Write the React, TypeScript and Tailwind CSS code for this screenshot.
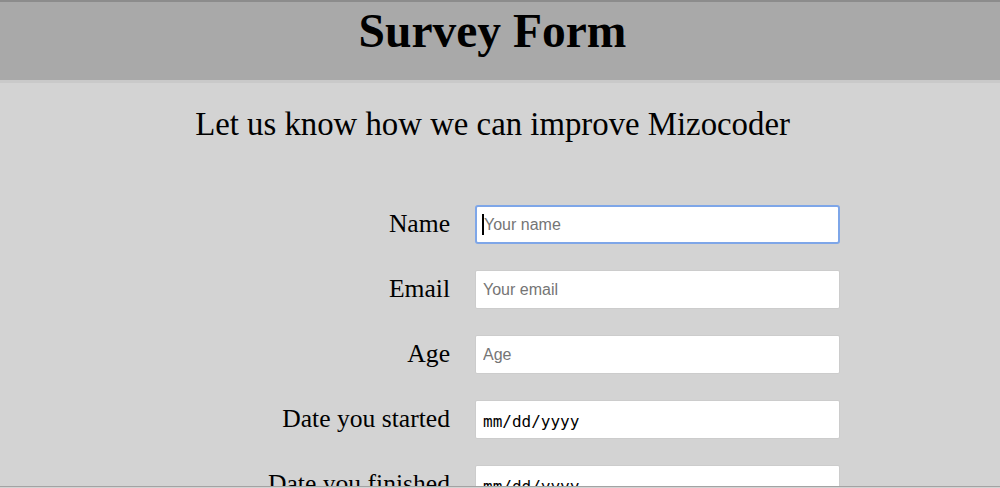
import React from 'react';

const fields = [
  { label: 'Name', placeholder: 'Your name', focused: true },
  { label: 'Email', placeholder: 'Your email' },
  { label: 'Age', placeholder: 'Age' },
  { label: 'Date you started', placeholder: 'mm/dd/yyyy', date: true },
  { label: 'Date you finished', placeholder: 'mm/dd/yyyy', date: true },
];

const serif = { fontFamily: '"Liberation Serif", "Times New Roman", serif' };

const App = () => {
  return (
    <div className="min-h-[488px] bg-[#d3d3d3] overflow-hidden" style={serif}>
      {/* Header */}
      <header className="h-[80px] bg-[#a9a9a9] border-t-2 border-[#8c8c8c] pt-[3px]">
        <h1 className="w-[985px] text-center text-[47.5px] font-bold leading-[52px] text-black">Survey Form</h1>
      </header>
      <div className="h-[3px] bg-[#c9c9c9]" />

      <h2 className="mt-[23px] w-[985px] text-center text-[32.8px] leading-[36px] text-black">
        Let us know how we can improve Mizocoder
      </h2>

      {/* Form */}
      <form className="mt-[63px] flex flex-col gap-[26px]">
        {fields.map((f) => (
          <div key={f.label} className="flex items-center">
            <label className="w-[450px] pb-[2px] text-right text-[25.6px] leading-[28px] text-black">{f.label}</label>
            <div className="relative ml-[25px]">
              <input
                type="text"
                placeholder={f.placeholder}
                className={
                  f.focused
                    ? 'block h-[39px] w-[365px] rounded-[3px] border-2 border-[#7ea6e8] bg-white px-[7px] pt-[1px] text-[16px] outline-none placeholder:text-[#757575]'
                    : f.date
                      ? 'block h-[39px] w-[365px] rounded-[2px] border border-[#cccccc] bg-white px-[7px] pt-[3px] text-[16px] outline-none placeholder:text-black'
                      : 'block h-[39px] w-[365px] rounded-[2px] border border-[#cccccc] bg-white px-[7px] pt-[1px] text-[16px] outline-none placeholder:text-[#757575]'
                }
                style={{
                  fontFamily: f.date
                    ? '"DejaVu Sans Mono", "Liberation Mono", monospace'
                    : '"Liberation Sans", Arial, sans-serif',
                }}
              />
              {f.focused && <span className="absolute left-[7px] top-[9px] h-[21px] w-[2px] bg-black" />}
            </div>
          </div>
        ))}
      </form>

      {/* window bottom edge */}
      <div className="fixed bottom-0 left-0 right-0 h-[2px] border-t border-[#a3a3a3] bg-[#d3d3d3]" />
    </div>
  );
};

export default App;
